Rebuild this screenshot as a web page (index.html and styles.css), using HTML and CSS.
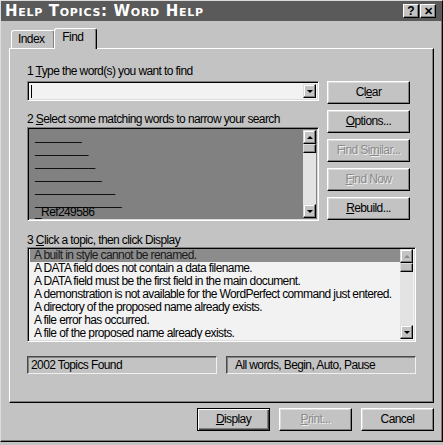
FILE: index.html
```html
<!DOCTYPE html>
<html lang="en">
<head>
  <meta charset="UTF-8">
  <meta name="viewport" content="width=device-width, initial-scale=1.0">
  <title>Help Topics: Word Help</title>
  <link rel="stylesheet" href="styles.css">
</head>
<body>
  <div class="janela">
    <div class="titulo">
      <span class="titulo-texto">Help Topics: Word Help</span>
      <div class="caps">
        <span class="cap">?</span>
        <span class="cap cap-x">&#x2715;</span>
      </div>
    </div>

    <div class="abas">
      <div class="aba">Index</div>
      <div class="aba ativa">Find</div>
    </div>

    <div class="painel">
      <div class="topo">
        <div class="coluna">
          <div class="rotulo">1 <u>T</u>ype the word(s) you want to find</div>
          <div class="combo">
            <div class="combo-campo"><span class="cursor"></span></div>
            <div class="seta-btn"><span class="tri-baixo"></span></div>
          </div>
          <div class="rotulo rotulo2">2 <u>S</u>elect some matching words to narrow your search</div>
          <div class="lista palavras">
            <div class="itens">
              <div class="item">_______</div>
              <div class="item">________</div>
              <div class="item">_________</div>
              <div class="item">__________</div>
              <div class="item">____________</div>
              <div class="item">_____________</div>
              <div class="item">_Ref249586</div>
            </div>
            <div class="rolagem">
              <div class="seta-btn"><span class="tri-cima"></span></div>
              <div class="polegar"></div>
              <div class="trilho"></div>
              <div class="seta-btn"><span class="tri-baixo"></span></div>
            </div>
          </div>
        </div>
        <div class="botoes">
          <div class="botao">Cl<u>e</u>ar</div>
          <div class="botao"><u>O</u>ptions...</div>
          <div class="botao inativo">Find Si<u>m</u>ilar...</div>
          <div class="botao inativo"><u>F</u>ind Now</div>
          <div class="botao"><u>R</u>ebuild...</div>
        </div>
      </div>

      <div class="rotulo rotulo3">3 <u>C</u>lick a topic, then click Display</div>
      <div class="lista topicos">
        <div class="itens">
          <div class="item selecionado">A built in style cannot be renamed.</div>
          <div class="item">A DATA field does not contain a data filename.</div>
          <div class="item">A DATA field must be the first field in the main document.</div>
          <div class="item">A demonstration is not available for the WordPerfect command just entered.</div>
          <div class="item">A directory of the proposed name already exists.</div>
          <div class="item">A file error has occurred.</div>
          <div class="item">A file of the proposed name already exists.</div>
        </div>
        <div class="rolagem">
          <div class="seta-btn"><span class="tri-cima apagado"></span></div>
          <div class="polegar"></div>
          <div class="trilho"></div>
          <div class="seta-btn"><span class="tri-baixo"></span></div>
        </div>
      </div>

      <div class="status">
        <div class="caixa-status">2002 Topics Found</div>
        <div class="caixa-status recuo">All words, Begin, Auto, Pause</div>
      </div>
    </div>

    <div class="rodape">
      <div class="botao padrao"><u>D</u>isplay</div>
      <div class="botao inativo"><u>P</u>rint...</div>
      <div class="botao">Cancel</div>
    </div>
  </div>
</body>
</html>
```

FILE: styles.css
```css
* {
  box-sizing: border-box;
}
body {
  margin: 0;
  background-color: #c3c3c3;
  font-family: "Liberation Sans", Arial, sans-serif;
  font-size: 12px;
  letter-spacing: -0.6px;
  color: #000;
}
.janela {
  width: 443px;
  height: 442px;
  border: 1px solid;
  border-color: #dcdcdc #000 #000 #dcdcdc;
  box-shadow: inset -1px -1px #7a7a7a;
  background-color: #c3c3c3;
}
.titulo {
  height: 20px;
  background-color: #5a5a5a;
  display: flex;
  align-items: center;
  justify-content: space-between;
  padding: 0 6px 0 4px;
}
.titulo-texto {
  color: #fff;
  font-family: "DejaVu Sans", sans-serif;
  font-weight: bold;
  font-variant: small-caps;
  font-size: 15px;
  letter-spacing: 0.7px;
  line-height: 20px;
}
.caps {
  display: flex;
  gap: 1px;
}
.cap {
  width: 16px;
  height: 14px;
  background-color: #c3c3c3;
  border: 1px solid;
  border-color: #fff #000 #000 #fff;
  box-shadow: inset -1px -1px #808080;
  font-weight: bold;
  font-size: 12px;
  letter-spacing: 0;
  line-height: 12px;
  text-align: center;
}
.cap-x {
  font-size: 11px;
}
.abas {
  display: flex;
  align-items: flex-end;
  height: 27px;
  padding-left: 10px;
}
.aba {
  height: 18px;
  padding: 0 10px 0 6px;
  border: 1px solid;
  border-bottom: none;
  border-color: #fff #000 #000 #fff;
  box-shadow: inset -1px 0 #808080;
  border-radius: 3px 3px 0 0;
  line-height: 17px;
}
.aba.ativa {
  height: 21px;
  padding: 0 13px 0 7px;
  margin-left: -1px;
  margin-bottom: -1px;
  background-color: #c3c3c3;
  line-height: 16px;
}
.painel {
  margin-left: 8px;
  width: 425px;
  height: 355px;
  border: 1px solid;
  border-color: #fff #000 #000 #fff;
  box-shadow: inset -1px -1px #808080;
  padding: 15px 0 0 17px;
}
.topo {
  display: flex;
  gap: 8px;
}
.coluna {
  width: 292px;
}
.rotulo {
  height: 14px;
  line-height: 14px;
  white-space: nowrap;
}
.combo {
  margin-top: 3px;
  height: 20px;
  display: flex;
  border: 1px solid;
  border-color: #808080 #fff #fff #808080;
  box-shadow: inset 1px 1px #000, inset -1px -1px #dcdcdc;
  background-color: #f2f2f2;
  padding: 2px;
}
.combo-campo {
  flex: 1;
  padding: 1px 0 0 1px;
}
.cursor {
  display: block;
  width: 1px;
  height: 13px;
  background-color: #000;
}
.seta-btn {
  width: 13px;
  height: 14px;
  background-color: #c3c3c3;
  border: 1px solid;
  border-color: #dcdcdc #000 #000 #dcdcdc;
  box-shadow: inset -1px -1px #808080, inset 1px 1px #fff;
  display: flex;
  align-items: center;
  justify-content: center;
}
.tri-baixo {
  border-left: 3px solid transparent;
  border-right: 3px solid transparent;
  border-top: 3px solid #000;
  margin-top: 1px;
}
.tri-cima {
  border-left: 3px solid transparent;
  border-right: 3px solid transparent;
  border-bottom: 3px solid #000;
}
.tri-cima.apagado {
  border-bottom-color: #8a8a8a;
}
.rotulo2 {
  margin-top: 11px;
}
.lista {
  display: flex;
  border: 1px solid;
  border-color: #808080 #fff #fff #808080;
  box-shadow: inset 1px 1px #000, inset -1px -1px #dcdcdc;
  padding: 2px;
  overflow: hidden;
}
.palavras {
  margin-top: 1px;
  height: 94px;
  background-color: #818181;
}
.itens {
  flex: 1;
  overflow: hidden;
}
.palavras .itens {
  overflow: visible;
}
.item {
  height: 13px;
  line-height: 13px;
  padding-left: 4px;
  white-space: nowrap;
}
.palavras .item {
  padding-left: 5px;
  letter-spacing: 0;
  line-height: 12px;
}
.palavras .item:last-child {
  letter-spacing: -0.6px;
  line-height: 9px;
}
.rolagem {
  width: 13px;
  display: flex;
  flex-direction: column;
  background-color: #e3e3e3;
}
.polegar {
  height: 9px;
  background-color: #c3c3c3;
  border: 1px solid;
  border-color: #dcdcdc #000 #000 #dcdcdc;
  box-shadow: inset -1px -1px #808080;
}
.trilho {
  flex: 1;
}
.botoes {
  display: flex;
  flex-direction: column;
  gap: 6px;
  padding-top: 17px;
}
.botao {
  width: 83px;
  height: 23px;
  border: 1px solid;
  border-color: #fff #000 #000 #fff;
  box-shadow: inset -1px -1px #808080, inset 1px 1px #dcdcdc;
  background-color: #c3c3c3;
  text-align: center;
  line-height: 20px;
}
.botao.inativo {
  color: #8a8a8a;
  text-shadow: 1px 1px #f0f0f0;
}
.rotulo3 {
  margin-top: 12px;
}
.topicos {
  width: 389px;
  height: 95px;
  background-color: #f2f2f2;
  padding: 1px 2px 2px 2px;
}
.topicos .item.selecionado {
  background-color: #8c8c8c;
  color: #1a1a1a;
}
.status {
  display: flex;
  gap: 9px;
  margin-top: 14px;
}
.caixa-status {
  width: 190px;
  height: 18px;
  border: 1px solid;
  border-color: #4a4a4a #f0f0f0 #f0f0f0 #4a4a4a;
  box-shadow: inset 1px 1px #808080;
  padding-left: 3px;
  line-height: 16px;
}
.caixa-status.recuo {
  padding-left: 8px;
}
.rodape {
  display: flex;
  justify-content: flex-end;
  gap: 9px;
  padding: 5px 8px 0 0;
}
.rodape .botao {
  width: 73px;
}
.botao.padrao {
  border-color: #000;
  box-shadow: inset 1px 1px #fff, inset -1px -1px #404040, inset -2px -2px #808080;
}
```
